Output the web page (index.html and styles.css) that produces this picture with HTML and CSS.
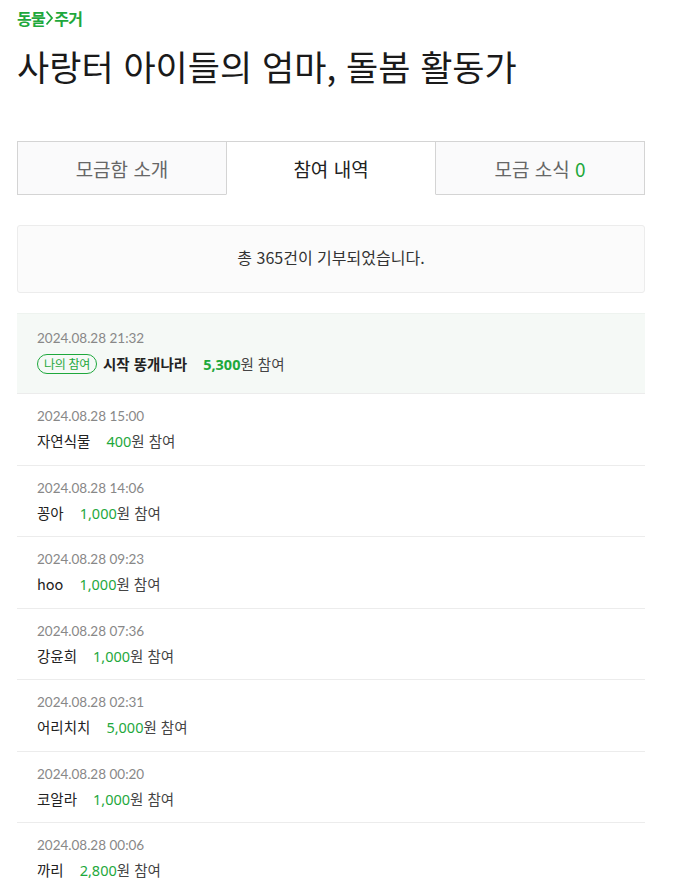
FILE: index.html
```html
<!DOCTYPE html>
<html lang="ko">
<head>
<meta charset="utf-8">
<link rel="stylesheet" href="styles.css">
</head>
<body>
<div class="page">
  <div class="crumb"><span>동물</span><svg class="sep" width="9" height="16" viewBox="0 0 9 16" aria-hidden="true"><path d="M1.5 1.5 L7 8 L1.5 14.5" fill="none" stroke="#1ea83c" stroke-width="1.8"/></svg><span>주거</span></div>
  <h1 class="title">사랑터 아이들의 엄마, 돌봄 활동가</h1>

  <div class="tabs">
    <div class="tab"><span>모금함 소개</span></div>
    <div class="tab active"><span>참여 내역</span></div>
    <div class="tab"><span>모금 소식 <span class="green">0</span></span></div>
  </div>

  <div class="summary">총 365건이 기부되었습니다.</div>

  <ul class="list">
    <li class="item mine">
      <div class="date">2024.08.28 21:32</div>
      <div class="line"><span class="badge">나의 참여</span><span class="name bold">시작 똥개나라</span><span class="amt bold">5,300</span><span class="won">원 참여</span></div>
    </li>
    <li class="item">
      <div class="date">2024.08.28 15:00</div>
      <div class="line"><span class="name">자연식물</span><span class="amt">400</span><span class="won">원 참여</span></div>
    </li>
    <li class="item">
      <div class="date">2024.08.28 14:06</div>
      <div class="line"><span class="name">꽁아</span><span class="amt">1,000</span><span class="won">원 참여</span></div>
    </li>
    <li class="item">
      <div class="date">2024.08.28 09:23</div>
      <div class="line"><span class="name">hoo</span><span class="amt">1,000</span><span class="won">원 참여</span></div>
    </li>
    <li class="item">
      <div class="date">2024.08.28 07:36</div>
      <div class="line"><span class="name">강윤희</span><span class="amt">1,000</span><span class="won">원 참여</span></div>
    </li>
    <li class="item">
      <div class="date">2024.08.28 02:31</div>
      <div class="line"><span class="name">어리치치</span><span class="amt">5,000</span><span class="won">원 참여</span></div>
    </li>
    <li class="item">
      <div class="date">2024.08.28 00:20</div>
      <div class="line"><span class="name">코알라</span><span class="amt">1,000</span><span class="won">원 참여</span></div>
    </li>
    <li class="item">
      <div class="date">2024.08.28 00:06</div>
      <div class="line"><span class="name">까리</span><span class="amt">2,800</span><span class="won">원 참여</span></div>
    </li>
  </ul>
</div>
</body>
</html>
```

FILE: styles.css
```css
* { box-sizing: border-box; }
html, body { margin: 0; padding: 0; background: #fff; }
body {
  font-family: "Noto Sans CJK KR", "Noto Sans", sans-serif;
  color: #222;
}
.page {
  width: 628px;
  margin-left: 17px;
}
.crumb {
  display: flex;
  align-items: center;
  font-size: 16px;
  font-weight: 700;
  color: #1ea83c;
  height: 20px;
  margin-top: 8px;
  letter-spacing: -0.6px;
}
.crumb .sep { display: block; }
.title {
  margin: 0;
  font-size: 35px;
  font-weight: 400;
  line-height: 48px;
  margin-top: 14px;
  color: #1a1a1a;
}
.tabs {
  display: flex;
  margin-top: 51px;
  height: 54px;
}
.tab {
  flex: 1;
  display: flex;
  align-items: center;
  justify-content: center;
  font-size: 19px;
  color: #666;
  background: #fafafb;
  border: 1px solid #d4d4d4;
}
.tab + .tab { border-left: none; }
.tab.active {
  background: #fff;
  color: #222;
  border-bottom: 1px solid #fff;
  border-left: 1px solid #d4d4d4;
  border-right: 1px solid #d4d4d4;
}
.tab.active + .tab { border-left: none; }
.tab:first-child { border-right: none; }
.green { color: #1ea83c; }
.summary {
  margin-top: 30px;
  height: 68px;
  display: flex;
  align-items: center;
  justify-content: center;
  background: #fbfbfb;
  border: 1px solid #ececec;
  border-radius: 3px;
  font-size: 16px;
  color: #333;
  padding-bottom: 4px;
}
.list {
  list-style: none;
  margin: 20px 0 0;
  padding: 0;
}
.item {
  padding: 13px 20px 13.5px;
  border-bottom: 1px solid #ececec;
}
.item.mine {
  background: #f5f9f6;
  border-top: 1px solid #eef3ef;
  padding: 15px 20px 19px;
}
.item.mine .line { margin-top: 7px; }
.date {
  font-family: "Lato", "Noto Sans", sans-serif;
  font-size: 13.5px;
  line-height: 18px;
  color: #888;
}
.line {
  margin-top: 6px;
  line-height: 20px;
  font-size: 14.5px;
  display: flex;
  align-items: center;
}
.name { color: #222; margin-right: 16px; }
.bold { font-weight: 700; }
.amt {
  font-family: "Noto Sans", sans-serif;
  font-size: 14.5px;
  color: #1ea83c;
}
.won { color: #444; }
.badge {
  display: inline-flex;
  align-items: center;
  height: 20px;
  padding: 0 6px;
  border: 1px solid #1ea83c;
  border-radius: 10px;
  font-size: 12px;
  color: #1ea83c;
  margin-right: 6px;
  line-height: 1;
  letter-spacing: -0.3px;
}
```
